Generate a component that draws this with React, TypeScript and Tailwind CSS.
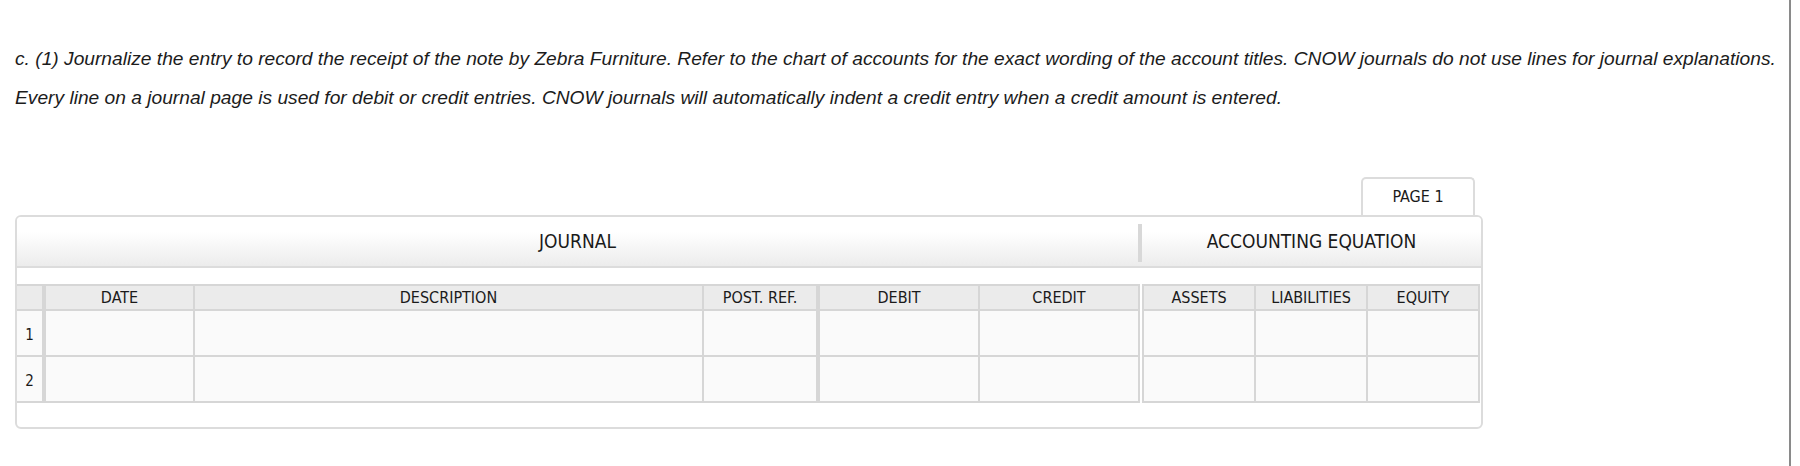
const journalCols = [
  { key: 'date', label: 'DATE', w: 'w-[147px]', gap: 'ml-[4px]' },
  { key: 'desc', label: 'DESCRIPTION', w: 'w-[507px]', gap: 'ml-[2px]' },
  { key: 'post', label: 'POST. REF.', w: 'w-[112px]', gap: 'ml-[2px]' },
  { key: 'debit', label: 'DEBIT', w: 'w-[158px]', gap: 'ml-[4px]' },
  { key: 'credit', label: 'CREDIT', w: 'w-[158px]', gap: 'ml-[2px]' },
];

const equationCols = [
  { key: 'assets', label: 'ASSETS' },
  { key: 'liabilities', label: 'LIABILITIES' },
  { key: 'equity', label: 'EQUITY' },
];

const rows = [1, 2];

export default function App() {
  return (
    <div className="h-[466px] w-[1791px] border-r-2 border-[#8a8a8a] bg-white">
      {/* Instructions */}
      <p className="pl-[15px] pt-[39px] text-[19.2px] leading-[39px] italic text-[#1c1c1c] font-['Liberation_Sans',Arial,sans-serif] whitespace-nowrap">
        c. (1) Journalize the entry to record the receipt of the note by Zebra Furniture. Refer to the chart of accounts for the exact wording of the account titles. CNOW journals do not use lines for journal explanations.
        <br />
        Every line on a journal page is used for debit or credit entries. CNOW journals will automatically indent a credit entry when a credit amount is entered.
      </p>

      <div className="ml-[15px] mt-[60px] w-[1468px] font-['DejaVu_Sans_Condensed','DejaVu_Sans',sans-serif] text-[#1a1a1a]">
        {/* Page tab */}
        <div className="flex justify-end pr-[8px]">
          <div className="flex h-[38px] w-[114px] items-center justify-center rounded-t-[5px] border-2 border-b-0 border-[#dcdcdc] bg-white text-[16px]">
            PAGE 1
          </div>
        </div>

        {/* Journal card */}
        <div className="rounded-[6px] border-2 border-[#dcdcdc] bg-white">
          <div className="flex h-[51px] border-b-2 border-[#dcdcdc] bg-linear-to-b from-white from-30% to-[#ececec] rounded-t-[4px]">
            <div className="flex w-[1121px] items-center justify-center text-[19px]">JOURNAL</div>
            <div className="mt-[7px] h-[38px] w-[4px] bg-[#d8d8d8]" />
            <div className="flex w-[339px] items-center justify-center text-[19px]">ACCOUNTING EQUATION</div>
          </div>

          <div className="mt-[16px] mb-[24px] flex">
            {/* Journal table */}
            <div className="flex w-[1123px] flex-col gap-[2px] bg-[#d6d6d6] pt-[2px] pr-[2px] pb-[2px]">
              <div className="flex h-[23px] text-[16px]">
                <div className="w-[25px] bg-[#ebebeb]" />
                {journalCols.map((c) => (
                  <div key={c.key} className={`${c.w} ${c.gap} flex items-center justify-center bg-[#ebebeb]`}>
                    {c.label}
                  </div>
                ))}
              </div>
              {rows.map((r) => (
                <div key={r} className="flex h-[44px] text-[15px]">
                  <div className="flex w-[25px] items-center justify-center pt-[4px] bg-[#fafafa]">{r}</div>
                  {journalCols.map((c) => (
                    <div key={c.key} className={`${c.w} ${c.gap} bg-[#fafafa]`} />
                  ))}
                </div>
              ))}
            </div>

            {/* Accounting equation table */}
            <div className="ml-[2px] flex w-[338px] flex-col gap-[2px] bg-[#d6d6d6] p-[2px]">
              <div className="flex h-[23px] gap-[2px] text-[16px]">
                {equationCols.map((c) => (
                  <div key={c.key} className="flex w-[110px] items-center justify-center bg-[#ebebeb]">
                    {c.label}
                  </div>
                ))}
              </div>
              {rows.map((r) => (
                <div key={r} className="flex h-[44px] gap-[2px]">
                  {equationCols.map((c) => (
                    <div key={c.key} className="w-[110px] bg-[#fafafa]" />
                  ))}
                </div>
              ))}
            </div>
          </div>
        </div>
      </div>
    </div>
  );
}
